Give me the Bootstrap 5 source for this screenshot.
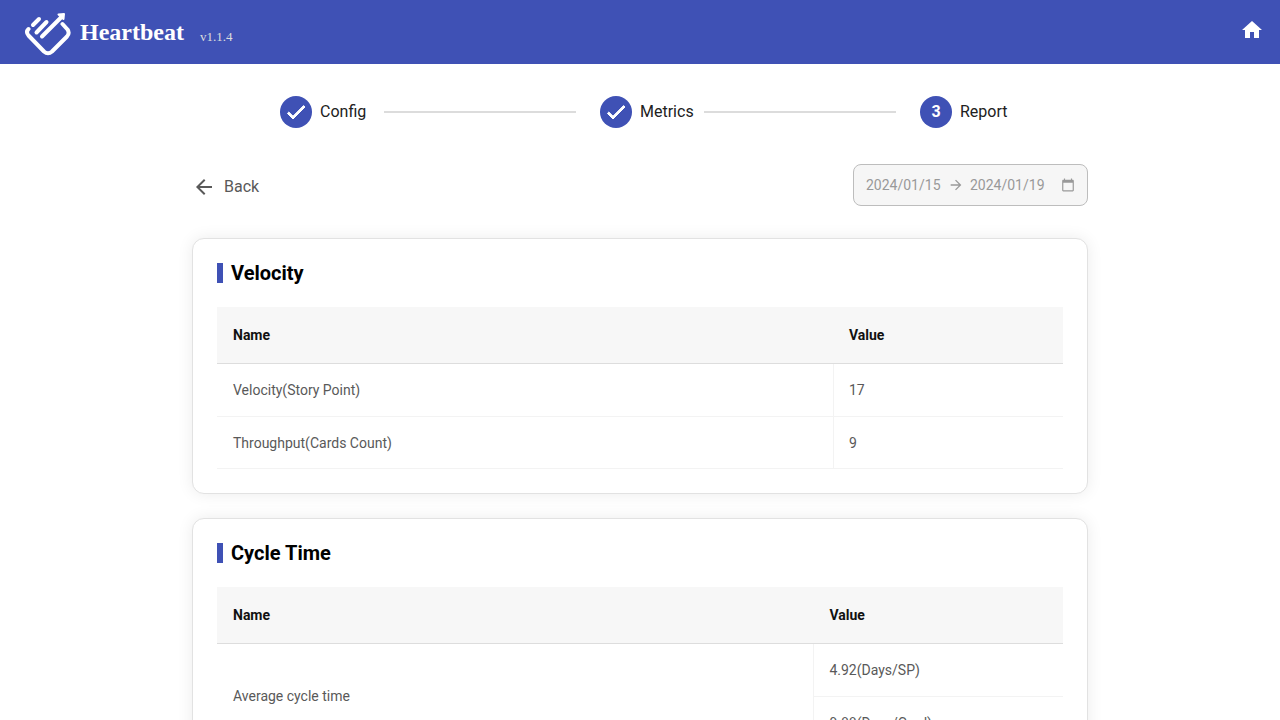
<!DOCTYPE html>
<html lang="en">
<head>
<meta charset="utf-8">
<meta name="viewport" content="width=device-width, initial-scale=1">
<title>Heartbeat</title>
<link href="https://cdn.jsdelivr.net/npm/bootstrap@5.3.0/dist/css/bootstrap.min.css" rel="stylesheet">
<style>
  :root { --brand: #3f51b5; }
  body { font-family: Roboto, "Liberation Sans", sans-serif; font-size: 16px; line-height: 24px; color: #000; background: #fff; overflow-x: hidden; }
  svg { display: block; flex: none; }
  .topbar { background: var(--brand); height: 64px; padding: 0 16px 0 24px; font-family: "Liberation Serif", serif; }
  .brand-name { font-size: 24px; font-weight: 700; line-height: 32px; color: #fff; }
  .version { font-size: 13px; line-height: 20px; color: #ddd; margin: 10px 0 0 16px; }
  .steps { width: 60%; margin: 0 auto; padding: 32px 0 0 24px; display: grid; grid-template-columns: 1fr 1fr 104px; }
  .step-label { min-width: 104px; color: #212121; }
  .step-dot { width: 32px; height: 32px; background: var(--brand); color: #fff; font-weight: 700; }
  .step-line { height: 2px; background: #dcdcdc; margin-right: 24px; }
  .page-main { width: 70%; margin: 0 auto; padding-top: 36px; }
  .back-btn { color: #595959; padding: 3px 0 0; gap: 8px; font-size: 16px; line-height: 24px; }
  .date-range { width: 235px; height: 42px; padding: 0 12px; background: #f6f6f6; border: 1px solid #bdbdbd; border-radius: 8px; color: #999; }
  .date-range input { width: 84px; border: 0; padding: 0; background: transparent; color: #999; font-size: 14px; line-height: 20px; }
  .panel { border: 1px solid #e2e2e2; border-radius: 12px; padding: 24px; box-shadow: 0 0 16px rgba(0,0,0,.08); background: #fff; }
  .panel-title { font-size: 20px; line-height: 20px; font-weight: 700; border-left: 6px solid var(--brand); padding-left: 8px; margin: 0 0 24px; }
  .metrics-table { font-size: 14px; line-height: 20px; margin: 0; table-layout: fixed; border-collapse: separate; border-spacing: 0; }
  .metrics-table th, .metrics-table td { padding: 15px 16px; border: 0 solid #f3f3f3; border-bottom-width: 1px; vertical-align: middle; box-shadow: none; }
  .metrics-table thead th { background: #f7f7f7; height: 57px; color: #111; border-bottom-color: #ddd; }
  .metrics-table tbody td { color: #595959; background: #fff; height: 53px; }
  .metrics-table tbody tr:last-child td { height: 52px; }
  .metrics-table tbody td.val { border-left-width: 1px; padding-left: 15px; }
</style>
</head>
<body>
<header class="topbar d-flex align-items-center justify-content-between">
  <div class="d-flex align-items-center">
    <svg width="48" height="48" viewBox="0 0 48 48" fill="none" stroke="#fff" stroke-width="4" stroke-linecap="round" stroke-linejoin="round" aria-hidden="true">
      <path d="M4.500 21Q1.500 24 4.500 27.500L20 43.500Q24 47 28 43.500L43 28.500Q46 25 43.500 21.500L38.500 16"/>
      <path d="M9 17L15 11M12.500 24.500L22.500 14M18 28.500L37 9.500"/>
      <path d="M34.500 6.500L40 6L39.500 11Z" fill="#fff" stroke-width="2"/>
    </svg>
    <span class="brand-name ms-2">Heartbeat</span>
    <span class="version">v1.1.4</span>
  </div>
  <a href="#" class="mb-1" aria-label="Home"><svg width="24" height="24" viewBox="0 0 24 24" fill="#fff"><path d="M10 20v-6h4v6h5v-8h3L12 3 2 12h3v8z"/></svg></a>
</header>

<nav class="steps" aria-label="Progress">
  <div class="d-flex align-items-center">
    <div class="step-label d-flex align-items-center gap-2">
      <span class="step-dot rounded-circle d-flex align-items-center justify-content-center"><svg width="24" height="24" viewBox="0 0 24 24" fill="#fff" stroke="#fff"><path d="M9 16.170 4.830 12l-1.420 1.410L9 19 21 7l-1.410-1.410z"/></svg></span>
      <span>Config</span>
    </div>
    <div class="step-line flex-fill"></div>
  </div>
  <div class="d-flex align-items-center">
    <div class="step-label d-flex align-items-center gap-2">
      <span class="step-dot rounded-circle d-flex align-items-center justify-content-center"><svg width="24" height="24" viewBox="0 0 24 24" fill="#fff" stroke="#fff"><path d="M9 16.170 4.830 12l-1.420 1.410L9 19 21 7l-1.410-1.410z"/></svg></span>
      <span>Metrics</span>
    </div>
    <div class="step-line flex-fill"></div>
  </div>
  <div class="step-label d-flex align-items-center gap-2">
    <span class="step-dot rounded-circle d-flex align-items-center justify-content-center">3</span>
    <span>Report</span>
  </div>
</nav>

<main class="page-main">
  <div class="d-flex align-items-center justify-content-between mb-4 pb-2">
    <button type="button" class="btn back-btn d-flex align-items-center border-0">
      <svg width="24" height="24" viewBox="0 0 24 24" fill="currentColor"><path d="M20 11H7.830l5.590-5.590L12 4l-8 8 8 8 1.410-1.410L7.830 13H20z"/></svg>
      <span>Back</span>
    </button>
    <div class="date-range d-flex align-items-center">
      <input type="text" value="2024/01/15" aria-label="Start date" disabled>
      <svg class="me-2" width="12" height="12" viewBox="3 3 18 18" fill="currentColor"><path d="M12 4l-1.410 1.410L16.170 11H4v2h12.170l-5.580 5.590L12 20l8-8z"/></svg>
      <input class="flex-fill" type="text" value="2024/01/19" aria-label="End date" disabled>
      <svg width="14" height="14" viewBox="1 0 22 24" fill="currentColor"><path d="M20 3h-1V1h-2v2H7V1H5v2H4c-1.100 0-2 .900-2 2v16c0 1.100.900 2 2 2h16c1.100 0 2-.900 2-2V5c0-1.100-.900-2-2-2zm0 18H4V8h16z"/></svg>
    </div>
  </div>

  <section class="panel mb-4">
    <h2 class="panel-title">Velocity</h2>
    <table class="table metrics-table">
      <colgroup><col style="width:72.800%"><col></colgroup>
      <thead><tr><th scope="col">Name</th><th scope="col">Value</th></tr></thead>
      <tbody>
        <tr><td>Velocity(Story Point)</td><td class="val">17</td></tr>
        <tr><td>Throughput(Cards Count)</td><td class="val">9</td></tr>
      </tbody>
    </table>
  </section>

  <section class="panel mb-4">
    <h2 class="panel-title">Cycle Time</h2>
    <table class="table metrics-table">
      <colgroup><col style="width:70.500%"><col></colgroup>
      <thead><tr><th scope="col">Name</th><th scope="col">Value</th></tr></thead>
      <tbody>
        <tr><td rowspan="2">Average cycle time</td><td class="val">4.92(Days/SP)</td></tr>
        <tr><td class="val">9.88(Days/Card)</td></tr>
      </tbody>
    </table>
  </section>
</main>
<script src="https://cdn.jsdelivr.net/npm/bootstrap@5.3.0/dist/js/bootstrap.bundle.min.js"></script>
</body>
</html>
